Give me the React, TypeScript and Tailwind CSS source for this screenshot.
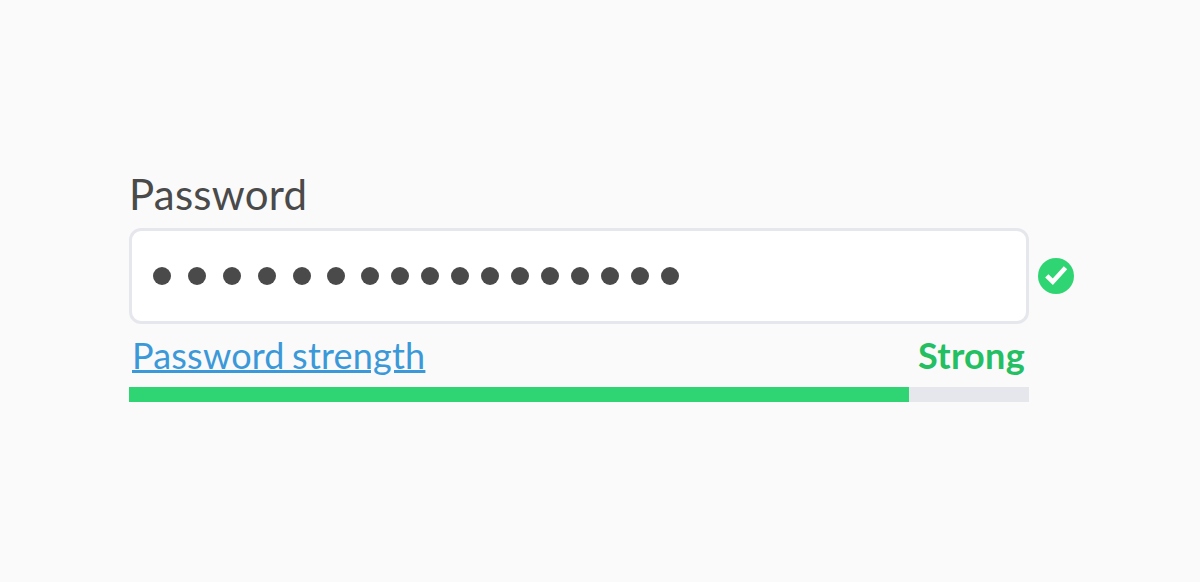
import React from "react";

interface PasswordDotsProps {
  gaps: number[];
}

// Space before each masked character, the first ones are set a bit wider
const DOT_GAPS = [
  0, 17.5, 17.5, 17.5, 17.5, 16.5, 16.5, 12.5, 12.5, 12.5, 12.5, 12.5, 12.5,
  12.5, 12.5, 12.5, 12.5,
];

const PasswordDots: React.FC<PasswordDotsProps> = ({ gaps }) => {
  return (
    <div className="flex items-center">
      {gaps.map((gap, index) => (
        <span
          key={index}
          className="size-[17.5px] shrink-0 rounded-full bg-[#4a4a4a]"
          style={{ marginLeft: gap }}
        />
      ))}
    </div>
  );
};

const CheckIcon: React.FC = () => (
  <svg className="size-9" viewBox="0 0 36 36" fill="none">
    <circle cx="18" cy="18" r="18" fill="#2fd573" />
    <path d="M8.8 17.8L14.8 23.7L27.5 9.7" stroke="#fff" strokeWidth="4.6" />
  </svg>
);

interface StrengthBarProps {
  value: number;
}

const StrengthBar: React.FC<StrengthBarProps> = ({ value }) => (
  <div className="h-[15px] w-full bg-[#e6e7ed]">
    <div className="h-full bg-[#2fd573]" style={{ width: `${value}%` }} />
  </div>
);

const App: React.FC = () => {
  return (
    <div className="h-[582px] w-[1200px] overflow-hidden bg-[#fafafa] pt-[169px] pl-[129px] font-['Lato',sans-serif]">
      <div className="h-[59px] text-[42px] leading-[50px] tracking-[0.25px] text-[#4a4a4a]">
        Password
      </div>
      <div className="flex items-center gap-[9px]">
        <div className="flex h-24 w-[900px] items-center rounded-xl border-3 border-[#e6e7ed] bg-white pl-[21px]">
          <PasswordDots gaps={DOT_GAPS} />
        </div>
        <CheckIcon />
      </div>
      <div className="flex h-[63px] w-[900px] justify-between pt-[9px] pr-1 pl-[3px] text-[36px] leading-[44px]">
        <a className="tracking-[0.2px] text-[#3b99d9] underline decoration-3 underline-offset-1 [word-spacing:-2px]">
          Password strength
        </a>
        <span className="font-bold tracking-[0.3px] text-[#23bf62]">Strong</span>
      </div>
      <div className="w-[900px]">
        <StrengthBar value={86.67} />
      </div>
    </div>
  );
};

export default App;
